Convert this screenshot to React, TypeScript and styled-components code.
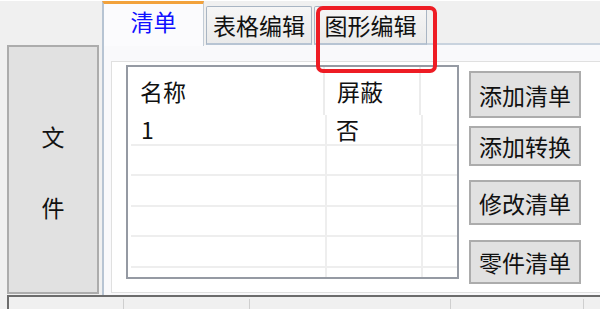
import React from "react";
import styled, { createGlobalStyle } from "styled-components";

const GlobalStyle = createGlobalStyle`
  html, body {
    margin: 0;
    padding: 0;
    background: #f0f0f0;
  }
  body {
    font-family: "Noto Sans CJK SC", "Noto Sans", sans-serif;
  }
`;

const rows = [
  { name: "1", hidden: "否" },
  { name: "", hidden: "" },
  { name: "", hidden: "" },
  { name: "", hidden: "" },
  { name: "", hidden: "" },
  { name: "", hidden: "" },
];

const buttons = [
  { label: "添加清单", gap: 6, height: 47 },
  { label: "添加转换", gap: 8, height: 40 },
  { label: "修改清单", gap: 14, height: 45 },
  { label: "零件清单", gap: 15, height: 44 },
];

const tabs = [
  { label: "清单", width: 102 },
  { label: "表格编辑", width: 106 },
  { label: "图形编辑", width: 113 },
];

const App: React.FC = () => {
  const [active, setActive] = React.useState(0);

  return (
    <Screen>
      <GlobalStyle />
      <Main>
        <LeftPane>
          <FileButton>
            <span>文</span>
            <span>件</span>
          </FileButton>
        </LeftPane>

        <TabControl>
          <TabStrip>
            {tabs.map((t, i) =>
              i === active ? (
                <ActiveTab key={t.label} $w={t.width} onClick={() => setActive(i)}>
                  {t.label}
                </ActiveTab>
              ) : (
                <Tab key={t.label} $w={t.width} onClick={() => setActive(i)}>
                  {t.label}
                </Tab>
              )
            )}
            <StripFill />
          </TabStrip>

          <TabPage>
            <Panel>
              <Grid>
                <HeaderRow>
                  <HeadCell $w={197}>名称</HeadCell>
                  <HeadCell $w={96}>屏蔽</HeadCell>
                  <HeadCell $w={0} />
                </HeaderRow>
                {rows.map((r, i) => (
                  <Row key={i}>
                    <Cell $w={196} $pad={10}>{r.name}</Cell>
                    <Cell $w={96} $pad={9}>{r.hidden}</Cell>
                    <Cell $w={0} $pad={0} />
                  </Row>
                ))}
              </Grid>

              <ButtonColumn>
                {buttons.map((b) => (
                  <SideButton key={b.label} $gap={b.gap} $h={b.height}>
                    {b.label}
                  </SideButton>
                ))}
              </ButtonColumn>
            </Panel>
          </TabPage>
        </TabControl>
      </Main>

      <StatusBar>
        <StatusCell $w={114} />
        <StatusCell $w={125} />
        <StatusCell $w={200} />
        <StatusCell $w={132} />
        <StatusCell $w={0} />
      </StatusBar>

      <Highlight />
    </Screen>
  );
};

export default App;

const Screen = styled.div`
  position: relative;
  width: 600px;
  height: 309px;
  overflow: hidden;
  background: #f0f0f0;
  border-top: 1px solid #ffffff;
  box-sizing: border-box;
  display: flex;
  flex-direction: column;
`;

const Main = styled.div`
  display: flex;
  height: 294px;
`;

const LeftPane = styled.div`
  width: 102px;
  flex-shrink: 0;
  padding: 44px 3px 0 7px;
  box-sizing: border-box;
`;

const FileButton = styled.div`
  height: 249px;
  box-sizing: border-box;
  background: #e1e1e1;
  border: 2px solid #acacac;
  display: flex;
  flex-direction: column;
  align-items: center;
  justify-content: center;
  gap: 48px;
  padding-top: 4px;
  font-size: 23px;
  line-height: 23px;
  color: #111;
`;

const TabControl = styled.div`
  flex: 1;
  display: flex;
  flex-direction: column;
  min-width: 0;
`;

const TabStrip = styled.div`
  display: flex;
  align-items: flex-end;
  height: 44px;
  flex-shrink: 0;
`;

const ActiveTab = styled.div<{ $w: number }>`
  width: ${(p) => p.$w}px;
  height: 45px;
  margin-bottom: -1px;
  position: relative;
  z-index: 1;
  box-sizing: border-box;
  background: #fbfbfd;
  border-left: 2px solid #b7c4d3;
  border-right: 1px solid #c3ccd6;
  border-top: 3px solid #f2a23c;
  display: flex;
  justify-content: center;
  padding-top: 5px;
  font-size: 23px;
  line-height: 24px;
  color: #1010ff;
  cursor: default;
`;

const Tab = styled.div<{ $w: number }>`
  width: ${(p) => p.$w}px;
  height: 39px;
  margin-left: 2px;
  box-sizing: border-box;
  background: linear-gradient(#f6f6f6, #eaeaea);
  border: 1px solid #a9b5c3;
  border-bottom: 2px solid #b7c4d3;
  border-radius: 2px 2px 0 0;
  display: flex;
  align-items: center;
  justify-content: center;
  font-size: 23px;
  line-height: 24px;
  color: #111;
  cursor: default;
`;

const StripFill = styled.div`
  flex: 1;
  border-bottom: 2px solid #c9d3de;
`;

const TabPage = styled.div`
  flex: 1;
  background: #f9f9fb;
  border-left: 2px solid #b7c4d3;
  padding: 16px 0 2px 7px;
  display: flex;
  min-height: 0;
`;

const Panel = styled.div`
  flex: 1;
  display: flex;
  align-items: flex-start;
  background: #ffffff;
  border: 1px solid #e0e0e0;
  border-right: none;
  padding: 3px 0 0 14px;
`;

const Grid = styled.div`
  width: 333px;
  height: 214px;
  box-sizing: border-box;
  border: 2px solid #959aa3;
  background: #ffffff;
  overflow: hidden;
  flex-shrink: 0;
`;

const HeaderRow = styled.div`
  display: flex;
  height: 48px;
`;

const HeadCell = styled.div<{ $w: number }>`
  width: ${(p) => (p.$w ? `${p.$w}px` : "auto")};
  flex: ${(p) => (p.$w ? "none" : "1")};
  box-sizing: border-box;
  border-right: ${(p) => (p.$w ? "2px solid #ececec" : "none")};
  padding-left: 12px;
  display: flex;
  align-items: center;
  font-size: 23px;
  color: #111;
`;

const Row = styled.div`
  display: flex;
  height: 30.6px;
  box-sizing: border-box;
  border-bottom: 2px solid #eeeeee;
  margin-left: 3px;
`;

const Cell = styled.div<{ $w: number; $pad: number }>`
  width: ${(p) => (p.$w ? `${p.$w}px` : "auto")};
  flex: ${(p) => (p.$w ? "none" : "1")};
  box-sizing: border-box;
  border-right: ${(p) => (p.$w ? "2px solid #eeeeee" : "none")};
  padding-left: ${(p) => p.$pad}px;
  display: flex;
  align-items: center;
  font-size: 23px;
  color: #111;
`;

const ButtonColumn = styled.div`
  display: flex;
  flex-direction: column;
  margin-left: 10px;
`;

const SideButton = styled.div<{ $gap: number; $h: number }>`
  width: 112px;
  height: ${(p) => p.$h}px;
  margin-top: ${(p) => p.$gap}px;
  box-sizing: border-box;
  background: #e1e1e1;
  border: 2px solid #acacac;
  display: flex;
  align-items: center;
  justify-content: center;
  font-size: 23px;
  color: #111;
  cursor: default;
`;

const StatusBar = styled.div`
  flex: 1;
  margin-left: 7px;
  display: flex;
  border-top: 2px solid #6c6c6c;
  border-left: 2px solid #6c6c6c;
  padding-top: 2px;
`;

const StatusCell = styled.div<{ $w: number }>`
  width: ${(p) => (p.$w ? `${p.$w}px` : "auto")};
  flex: ${(p) => (p.$w ? "none" : "1")};
  border-right: ${(p) => (p.$w ? "1px solid #cfcfcf" : "none")};
`;

const Highlight = styled.div`
  position: absolute;
  left: 316px;
  top: 5px;
  width: 121px;
  height: 67px;
  box-sizing: border-box;
  border: 4px solid #ee1c24;
  border-radius: 7px;
  pointer-events: none;
`;
